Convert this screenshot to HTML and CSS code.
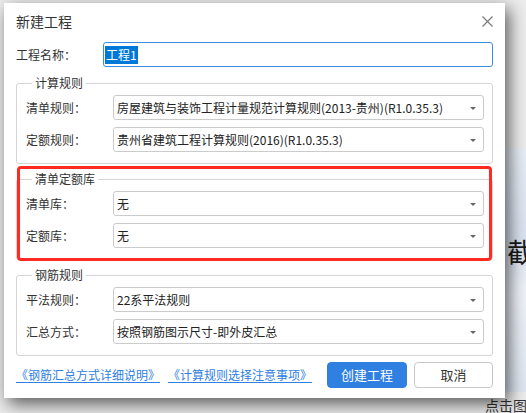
FILE: index.html
```html
<!DOCTYPE html>
<html lang="zh-CN">
<head>
<meta charset="utf-8">
<title>新建工程</title>
<link rel="stylesheet" href="styles.css">
</head>
<body>
<div class="screen">
  <div class="backdrop"><span class="bd-char">截</span></div>
  <span class="bd-caption">点击图片</span>
  <div class="dialog">
    <div class="title-bar">
      <span class="title">新建工程</span>
      <svg class="close" width="11" height="11" viewBox="0 0 11 11"><path d="M0.5 0.5 L10.5 10.5 M10.5 0.5 L0.5 10.5" stroke="#7a7a7a" stroke-width="1.2" fill="none"/></svg>
    </div>
    <div class="row name-row">
      <span class="label">工程名称：</span>
      <div class="input"><span class="selected">工程1</span></div>
    </div>
    <fieldset class="group">
      <legend>计算规则</legend>
      <div class="row">
        <span class="label">清单规则：</span>
        <div class="select"><span class="value">房屋建筑与装饰工程计量规范计算规则(2013-贵州)(R1.0.35.3)</span><i class="caret"></i></div>
      </div>
      <div class="row">
        <span class="label">定额规则：</span>
        <div class="select"><span class="value">贵州省建筑工程计算规则(2016)(R1.0.35.3)</span><i class="caret"></i></div>
      </div>
    </fieldset>
    <fieldset class="group">
      <legend>清单定额库</legend>
      <div class="row">
        <span class="label">清单库：</span>
        <div class="select"><span class="value">无</span><i class="caret"></i></div>
      </div>
      <div class="row">
        <span class="label">定额库：</span>
        <div class="select"><span class="value">无</span><i class="caret"></i></div>
      </div>
    </fieldset>
    <fieldset class="group">
      <legend>钢筋规则</legend>
      <div class="row">
        <span class="label">平法规则：</span>
        <div class="select"><span class="value">22系平法规则</span><i class="caret"></i></div>
      </div>
      <div class="row">
        <span class="label">汇总方式：</span>
        <div class="select"><span class="value">按照钢筋图示尺寸-即外皮汇总</span><i class="caret"></i></div>
      </div>
    </fieldset>
    <div class="footer">
      <div class="links">
        <a class="link" href="#">《钢筋汇总方式详细说明》</a>
        <a class="link" href="#">《计算规则选择注意事项》</a>
      </div>
      <div class="buttons">
        <button class="btn primary">创建工程</button>
        <button class="btn cancel">取消</button>
      </div>
    </div>
    <div class="highlight"></div>
  </div>
</div>
</body>
</html>
```
FILE: styles.css
```css
* { box-sizing: border-box; }
html, body { margin: 0; padding: 0; }
body {
  width: 526px;
  height: 413px;
  overflow: hidden;
  background: #ececec;
  font-family: "Noto Sans CJK SC", "Microsoft YaHei", "Noto Sans", sans-serif;
  color: #333;
}
.screen {
  position: relative;
  width: 526px;
  height: 413px;
  padding: 3px 0 0 4px;
}
.backdrop {
  position: absolute;
  left: 498px;
  top: 148px;
  width: 28px;
  height: 244px;
  background: linear-gradient(160deg, #e9eef6 0%, #d9e2ef 40%, #eef2f8 60%, #dfe6f1 100%);
}
.bd-char {
  position: absolute;
  left: 9px;
  top: 89px;
  font-size: 27px;
  line-height: 30px;
  color: #1a1a1a;
}
.bd-caption {
  position: absolute;
  left: 485px;
  top: 396px;
  font-size: 14px;
  line-height: 18px;
  color: #333;
  white-space: nowrap;
}
.dialog {
  position: relative;
  width: 501px;
  height: 395px;
  background: #fff;
  padding: 0 12px;
  box-shadow: 4px 6px 16px rgba(0, 0, 0, 0.62);
  display: flex;
  flex-direction: column;
}
.title-bar {
  height: 39px;
  display: flex;
  justify-content: space-between;
  align-items: flex-start;
}
.title {
  font-size: 14px;
  line-height: 37px;
  color: #333;
}
.close { margin-top: 13px; }
.row {
  display: flex;
  align-items: center;
  height: 25px;
}
.row + .row { margin-top: 7px; }
.label {
  width: 87px;
  flex: none;
  font-size: 12px;
  line-height: 16px;
  color: #333;
  white-space: nowrap;
}
.input {
  flex: 1;
  height: 25px;
  border: 1px solid #3b8ce4;
  border-radius: 3px;
  padding: 3px 0 0 1px;
  font-size: 12px;
  line-height: 17px;
}
.selected {
  display: inline-block;
  background: #0078d7;
  color: #fff;
  padding: 0 1px;
  height: 18px;
  line-height: 18px;
}
.group {
  margin: 8px 0 0 0;
  border: 1px solid #d4d4d4;
  border-radius: 3px;
  padding: 4px 8px 11px 9px;
  min-width: 0;
}
.group + .group { margin-top: 7px; }
.group legend {
  margin-left: 6px;
  padding: 0 3px;
  font-size: 12px;
  line-height: 16px;
  color: #333;
}
.select {
  position: relative;
  flex: 1;
  height: 25px;
  border: 1px solid #cbcbcb;
  border-radius: 3px;
  padding: 0 20px 0 3px;
  display: flex;
  align-items: center;
  font-size: 12px;
  line-height: 16px;
  color: #222;
  white-space: nowrap;
  overflow: hidden;
}
.caret {
  position: absolute;
  right: 7px;
  top: 11px;
  width: 0;
  height: 0;
  border-left: 3px solid transparent;
  border-right: 3px solid transparent;
  border-top: 3px solid #666;
}
.footer {
  margin-top: 6px;
  height: 26px;
  display: flex;
  justify-content: space-between;
  align-items: center;
}
.links {
  display: flex;
  gap: 8px;
}
.link {
  font-size: 12px;
  line-height: 16px;
  color: #2e80e2;
  text-decoration: underline;
  text-underline-offset: 2px;
  white-space: nowrap;
}
.buttons {
  display: flex;
  gap: 7px;
}
.btn {
  height: 26px;
  border-radius: 4px;
  font-family: inherit;
  font-size: 13px;
  line-height: 16px;
  padding: 0;
  cursor: pointer;
}
.btn.primary {
  width: 80px;
  background: #2f80e1;
  border: 1px solid #2f80e1;
  color: #fff;
}
.btn.cancel {
  width: 79px;
  background: #fff;
  border: 1px solid #c9c9c9;
  color: #333;
}
.highlight {
  position: absolute;
  left: 13px;
  top: 163px;
  width: 475px;
  height: 95px;
  border: 3px solid #ff2b22;
  border-radius: 4px;
  pointer-events: none;
}
```
